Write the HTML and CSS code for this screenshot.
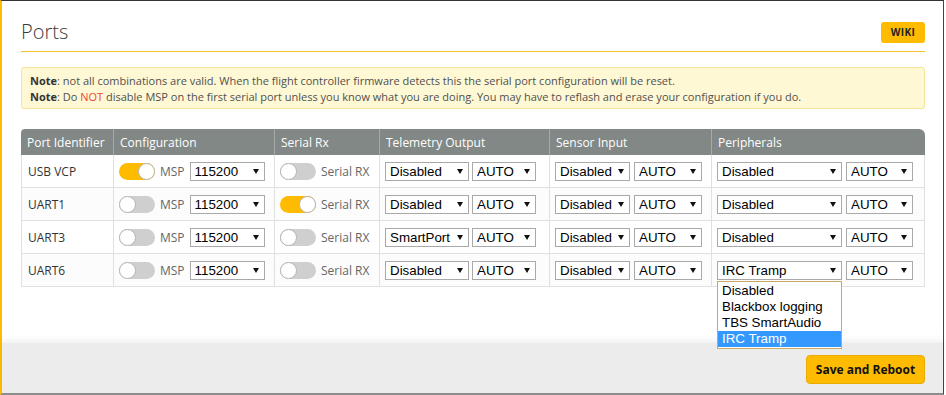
FILE: index.html
```html
<!DOCTYPE html>
<html lang="en">
<head>
    <meta charset="UTF-8">
    <title>Ports</title>
    <link rel="stylesheet" href="styles.css">
</head>
<body>
    <div class="frame">
        <div class="content">
            <div class="header">
                <h1 class="title">Ports</h1>
                <a href="#" class="wiki-btn">WIKI</a>
            </div>

            <div class="note">
                <p><b>Note</b>: not all combinations are valid. When the flight controller firmware detects this the serial port configuration will be reset.</p>
                <p><b>Note</b>: Do <span class="warn">NOT</span> disable MSP on the first serial port unless you know what you are doing. You may have to reflash and erase your configuration if you do.</p>
            </div>

            <table class="ports">
                <colgroup>
                    <col style="width: 93px">
                    <col style="width: 161px">
                    <col style="width: 105px">
                    <col style="width: 170px">
                    <col style="width: 162px">
                    <col style="width: 213px">
                </colgroup>
                <thead>
                    <tr>
                        <th>Port Identifier</th>
                        <th>Configuration</th>
                        <th>Serial Rx</th>
                        <th>Telemetry Output</th>
                        <th>Sensor Input</th>
                        <th>Peripherals</th>
                    </tr>
                </thead>
                <tbody>
                    <tr>
                        <td>USB VCP</td>
                        <td><div class="cell"><span class="switch on"></span><span class="lbl">MSP</span><span class="sel w-baud"><select><option>115200</option></select></span></div></td>
                        <td><div class="cell"><span class="switch"></span><span class="lbl">Serial RX</span></div></td>
                        <td><div class="cell pair-3"><span class="sel w-tel"><select><option>Disabled</option></select></span><span class="sel w-tel-auto"><select><option>AUTO</option></select></span></div></td>
                        <td><div class="cell"><span class="sel w-sen"><select><option>Disabled</option></select></span><span class="sel w-sen-auto"><select><option>AUTO</option></select></span></div></td>
                        <td><div class="cell"><span class="sel w-per"><select><option>Disabled</option></select></span><span class="sel w-per-auto"><select><option>AUTO</option></select></span></div></td>
                    </tr>
                    <tr>
                        <td>UART1</td>
                        <td><div class="cell"><span class="switch"></span><span class="lbl">MSP</span><span class="sel w-baud"><select><option>115200</option></select></span></div></td>
                        <td><div class="cell"><span class="switch on"></span><span class="lbl">Serial RX</span></div></td>
                        <td><div class="cell pair-3"><span class="sel w-tel"><select><option>Disabled</option></select></span><span class="sel w-tel-auto"><select><option>AUTO</option></select></span></div></td>
                        <td><div class="cell"><span class="sel w-sen"><select><option>Disabled</option></select></span><span class="sel w-sen-auto"><select><option>AUTO</option></select></span></div></td>
                        <td><div class="cell"><span class="sel w-per"><select><option>Disabled</option></select></span><span class="sel w-per-auto"><select><option>AUTO</option></select></span></div></td>
                    </tr>
                    <tr>
                        <td>UART3</td>
                        <td><div class="cell"><span class="switch"></span><span class="lbl">MSP</span><span class="sel w-baud"><select><option>115200</option></select></span></div></td>
                        <td><div class="cell"><span class="switch"></span><span class="lbl">Serial RX</span></div></td>
                        <td><div class="cell pair-3"><span class="sel w-tel"><select><option>SmartPort</option></select></span><span class="sel w-tel-auto"><select><option>AUTO</option></select></span></div></td>
                        <td><div class="cell"><span class="sel w-sen"><select><option>Disabled</option></select></span><span class="sel w-sen-auto"><select><option>AUTO</option></select></span></div></td>
                        <td><div class="cell"><span class="sel w-per"><select><option>Disabled</option></select></span><span class="sel w-per-auto"><select><option>AUTO</option></select></span></div></td>
                    </tr>
                    <tr>
                        <td>UART6</td>
                        <td><div class="cell"><span class="switch"></span><span class="lbl">MSP</span><span class="sel w-baud"><select><option>115200</option></select></span></div></td>
                        <td><div class="cell"><span class="switch"></span><span class="lbl">Serial RX</span></div></td>
                        <td><div class="cell pair-3"><span class="sel w-tel"><select><option>Disabled</option></select></span><span class="sel w-tel-auto"><select><option>AUTO</option></select></span></div></td>
                        <td><div class="cell"><span class="sel w-sen"><select><option>Disabled</option></select></span><span class="sel w-sen-auto"><select><option>AUTO</option></select></span></div></td>
                        <td>
                            <div class="cell">
                                <span class="sel w-per">
                                    <select><option>IRC Tramp</option></select>
                                    <ul class="dropdown">
                                        <li>Disabled</li>
                                        <li>Blackbox logging</li>
                                        <li>TBS SmartAudio</li>
                                        <li class="active">IRC Tramp</li>
                                    </ul>
                                </span>
                                <span class="sel w-per-auto"><select><option>AUTO</option></select></span>
                            </div>
                        </td>
                    </tr>
                </tbody>
            </table>
        </div>

        <div class="footer">
            <a href="#" class="save-btn">Save and Reboot</a>
        </div>
    </div>
</body>
</html>
```

FILE: styles.css
```css
:root {
    --accent: #ffbb00;
    --header-bg: #828885;
    --cell-border: #e0e0e0;
    --text-color: #333;
}

html, body {
    margin: 0;
    padding: 0;
    overflow: hidden;
}

body {
    font-family: "Open Sans", "Liberation Sans", Arial, sans-serif;
    color: var(--text-color);
    background: #fff;
}

.frame {
    width: 944px;
    height: 395px;
    box-sizing: border-box;
    border-top: 1px solid #333;
    border-left: 2px solid var(--accent);
    border-right: 1px solid #444;
    border-bottom: 2px solid #8c8c8c;
    display: flex;
    flex-direction: column;
}

.content {
    flex: 1;
    padding: 0 18px 0 19px;
    position: relative;
    z-index: 2;
}

.header {
    display: flex;
    align-items: center;
    justify-content: space-between;
    padding: 19px 0 7px;
    border-bottom: 1px solid #f2c12e;
}

.title {
    margin: 0;
    font-size: 20px;
    line-height: 24px;
    font-weight: 300;
    color: #3a3a3a;
}

.wiki-btn {
    display: inline-flex;
    align-items: center;
    justify-content: center;
    width: 44px;
    height: 21px;
    box-sizing: border-box;
    background: var(--accent);
    border-radius: 3px;
    color: #222;
    font-size: 10px;
    font-weight: 700;
    letter-spacing: 0.4px;
    text-decoration: none;
}

.note {
    margin-top: 15px;
    padding: 5px 8px 3px;
    background: #fff8d4;
    border: 1px solid #f5e39a;
    border-radius: 3px;
    font-size: 11px;
    line-height: 16px;
    color: #505050;
}

.note p {
    margin: 0;
}

.note b {
    color: #333;
}

.warn {
    color: #f0443a;
}

.ports {
    margin-top: 20px;
    width: 904px;
    table-layout: fixed;
    border-collapse: separate;
    border-spacing: 0;
    font-size: 12px;
}

.ports th {
    height: 26px;
    padding: 0 0 0 6px;
    background: var(--header-bg);
    color: #fff;
    font-weight: 400;
    text-align: left;
    border-right: 1px solid #a6aaa8;
}

.ports th:first-child {
    border-top-left-radius: 4px;
}

.ports th:last-child {
    border-top-right-radius: 6px;
    border-right: none;
}

.ports td {
    height: 32px;
    padding: 0 0 0 5px;
    border-right: 1px solid var(--cell-border);
    border-bottom: 1px solid var(--cell-border);
    vertical-align: middle;
    color: #333;
}

.ports td:first-child {
    border-left: 1px solid var(--cell-border);
    padding-left: 6px;
}

.ports tbody tr:nth-child(even) td {
    background: #fcfcfc;
}

.cell {
    display: flex;
    align-items: center;
    gap: 4px;
}

.switch {
    flex: none;
    position: relative;
    width: 36px;
    height: 17px;
    border-radius: 9px;
    background: #cfcfcf;
    margin-right: 1px;
}

.switch::after {
    content: "";
    position: absolute;
    top: 0;
    left: 0;
    width: 15px;
    height: 15px;
    border-radius: 50%;
    background: #fff;
    border: 1px solid #b5b5b5;
}

.switch.on {
    background: var(--accent);
}

.switch.on::after {
    left: auto;
    right: 0;
}

.lbl {
    color: #666;
    margin-right: 1px;
}

.sel {
    position: relative;
    display: inline-block;
    flex: none;
    height: 19px;
}

.sel select {
    -webkit-appearance: none;
    appearance: none;
    width: 100%;
    height: 19px;
    margin: 0;
    padding: 0 0 0 4px;
    border: 1px solid #a9a9a9;
    border-radius: 0;
    background: #fff;
    color: #000;
    font-family: "Liberation Sans", Arial, sans-serif;
    font-size: 13.33px;
    line-height: 17px;
    outline: none;
}

.sel::after {
    content: "";
    position: absolute;
    right: 6px;
    top: 7px;
    border-left: 3.5px solid transparent;
    border-right: 3.5px solid transparent;
    border-top: 5px solid #111;
    pointer-events: none;
}

.pair-3 {
    gap: 3px;
}

.w-baud { width: 75px; }
.w-tel { width: 84px; }
.w-tel-auto { width: 64px; }
.w-sen { width: 75px; }
.w-sen-auto { width: 68px; }
.w-per { width: 125px; }
.w-per-auto { width: 67px; }

.dropdown {
    position: absolute;
    top: 20px;
    left: 0;
    width: 125px;
    box-sizing: border-box;
    margin: 0;
    padding: 1px 0;
    list-style: none;
    background: #fff;
    border: 1px solid #c9a865;
    font-family: "Liberation Sans", Arial, sans-serif;
    font-size: 13.33px;
    line-height: 16px;
    color: #000;
    z-index: 5;
}

.dropdown li {
    padding-left: 4px;
    height: 16px;
}

.dropdown li.active {
    background: #3399ff;
    color: #fff;
}

.footer {
    height: 51px;
    box-sizing: border-box;
    display: flex;
    justify-content: flex-end;
    align-items: flex-start;
    padding: 12px 18px 0 0;
    background: #ececec;
    box-shadow: 0 -3px 6px rgba(0, 0, 0, 0.05);
    border-top: 1px solid #f3f3f3;
}

.save-btn {
    display: inline-flex;
    align-items: center;
    justify-content: center;
    width: 119px;
    height: 29px;
    box-sizing: border-box;
    background: var(--accent);
    border: 1px solid #e9ac00;
    border-radius: 4px;
    color: #111;
    font-size: 12px;
    font-weight: 700;
    text-decoration: none;
}
```
